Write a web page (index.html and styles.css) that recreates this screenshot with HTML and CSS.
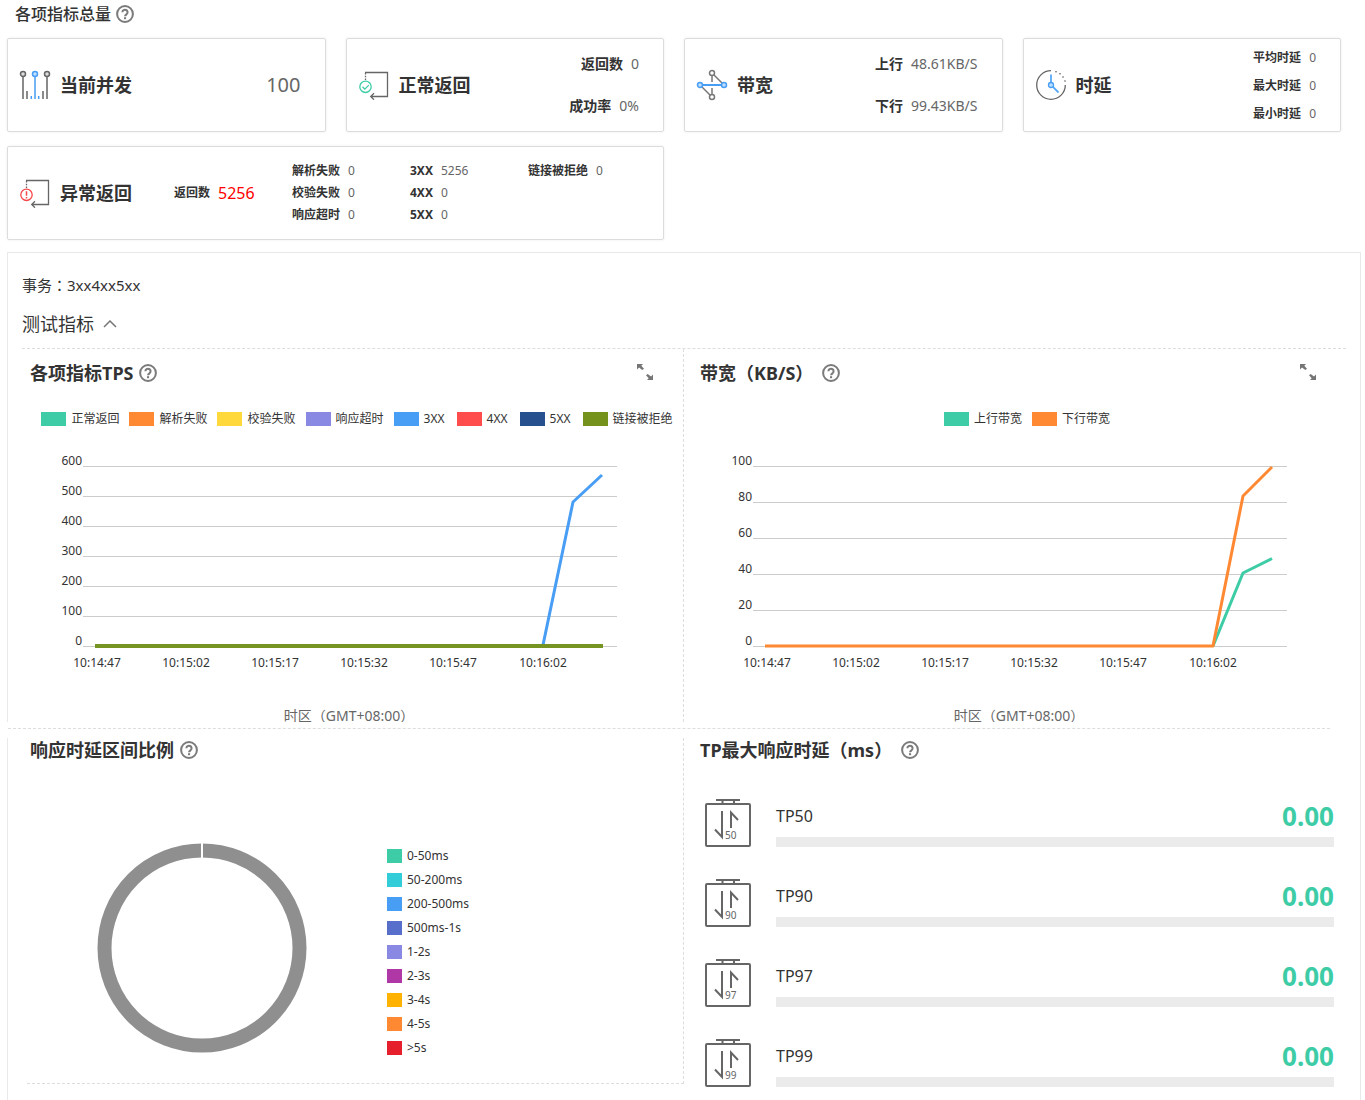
FILE: index.html
```html
<!DOCTYPE html>
<html lang="zh-CN">
<head>
<meta charset="utf-8">
<meta name="viewport" content="width=device-width, initial-scale=1">
<title>各项指标总量</title>
<link rel="stylesheet" href="styles.css">
</head>
<body>
<svg class="defs" aria-hidden="true">
  <symbol id="help" viewBox="0 0 18 18">
    <circle cx="9" cy="9" r="7.9" fill="none" stroke="#7b7b7b" stroke-width="2"/>
    <path d="M6.4 7.3a2.6 2.5 0 1 1 4.2 1.9c-.9.7-1.5 1.1-1.5 2" fill="none" stroke="#7b7b7b" stroke-width="2"/>
    <rect x="8" y="12.2" width="2.1" height="2" fill="#7b7b7b"/>
  </symbol>
  <symbol id="expand" viewBox="0 0 18 18">
    <path d="M1 0h6L5.300 1.700 8 4.800 6.300 6 3 3.600 1 5.500zM17 16h-6l1.700-1.700L10 11.200 11.700 10 15 12.400l2-1.900z" fill="#757575"/>
  </symbol>
  <symbol id="loop" viewBox="0 0 30 30">
    <path d="M6.500 10V3" fill="none" stroke="#666" stroke-width="1.300" stroke-dasharray="1.400 1.400"/>
    <path d="M6 2.500h22.500v24H12M15 23.300l-3.300 3.200 3.300 3.200" fill="none" stroke="#666" stroke-width="1.300"/>
  </symbol>
  <symbol id="tp" viewBox="0 0 46 48">
    <rect x="1" y="5" width="44" height="42" rx="1" fill="none" stroke="#666" stroke-width="2"/>
    <path d="M11 1h24M17.500 1v4M29 1v4M17 12v26l-7-7.500M26 29V13.500l7 7.500" fill="none" stroke="#666" stroke-width="2"/>
  </symbol>
</svg>

<header class="page-head">
  <h1>各项指标总量</h1>
  <button class="icon-btn" type="button" aria-label="帮助"><svg width="18" height="18"><use href="#help"/></svg></button>
</header>

<section class="cards">
  <article class="card">
    <svg class="card-icon" viewBox="0 0 30 30" fill="none" stroke-width="1.500">
      <g stroke="#666" fill="#ddd"><circle cx="3" cy="4" r="2.500"/><circle cx="27" cy="4" r="2.500"/><path d="M3 6.500V29M27 6.500V29M7 21v8M23 21v8"/></g>
      <g stroke="#489df4" fill="#bfe0ff"><circle cx="15" cy="4" r="2.500"/><path d="M15 6.500V29M11.300 26v3M18.700 26v3"/></g>
    </svg>
    <h2>当前并发</h2>
    <p class="big">100</p>
  </article>
  <article class="card">
    <svg class="card-icon" viewBox="0 0 30 30"><use href="#loop"/><circle cx="6.500" cy="16.800" r="5.700" fill="#fff" stroke="#3dcca6" stroke-width="1.300"/><path d="M3.500 16.800l2.300 2.300 4-4" fill="none" stroke="#3dcca6" stroke-width="1.300"/></svg>
    <h2>正常返回</h2>
    <dl class="stats two"><div><dt>返回数</dt><dd>0</dd></div><div><dt>成功率</dt><dd>0%</dd></div></dl>
  </article>
  <article class="card">
    <svg class="card-icon" viewBox="0 0 30 30" fill="#fff" stroke="#777" stroke-width="1.500">
      <path d="M15 5v7M17 5l8 8M15 18v7M5 17l8 8"/><circle cx="15" cy="3" r="2.500"/><circle cx="15" cy="27" r="2.500"/>
      <g stroke="#489df4" fill="#bfe0ff"><path d="M5 15h20" stroke-width="2"/><circle cx="3" cy="15" r="2.500"/><circle cx="27" cy="15" r="2.500"/></g>
    </svg>
    <h2>带宽</h2>
    <dl class="stats two"><div><dt>上行</dt><dd>48.61KB/S</dd></div><div><dt>下行</dt><dd>99.43KB/S</dd></div></dl>
  </article>
  <article class="card">
    <svg class="card-icon" viewBox="0 0 30 30" fill="none">
      <path d="M15 .7A14.300 14.300 0 1 0 29.300 15" stroke="#666" stroke-width="1.300"/>
      <g fill="#555"><circle cx="20" cy="1.700" r=".8"/><circle cx="24" cy="3.800" r=".8"/><circle cx="27" cy="7" r=".8"/><circle cx="29" cy="11" r=".8"/></g>
      <path d="M15 4.500V15l7.500 7.500" stroke="#5aa9f7" stroke-width="1.800"/><circle cx="15" cy="15" r="2.500" fill="#bfe0ff" stroke="#489df4" stroke-width="1.300"/>
    </svg>
    <h2>时延</h2>
    <dl class="stats three"><div><dt>平均时延</dt><dd>0</dd></div><div><dt>最大时延</dt><dd>0</dd></div><div><dt>最小时延</dt><dd>0</dd></div></dl>
  </article>
  <article class="card wide">
    <svg class="card-icon" viewBox="0 0 30 30"><use href="#loop"/><circle cx="6.500" cy="16.800" r="5.700" fill="#fff" stroke="#f5484a" stroke-width="1.300"/><path d="M6.500 13.300v4.500M6.500 19v1.500" fill="none" stroke="#f5484a" stroke-width="1.500"/></svg>
    <h2>异常返回</h2>
    <dl class="total"><dt>返回数</dt><dd>5256</dd></dl>
    <dl class="errors"><div><dt>解析失败</dt><dd>0</dd></div><div><dt>校验失败</dt><dd>0</dd></div><div><dt>响应超时</dt><dd>0</dd></div></dl>
    <dl class="errors"><div><dt>3XX</dt><dd>5256</dd></div><div><dt>4XX</dt><dd>0</dd></div><div><dt>5XX</dt><dd>0</dd></div></dl>
    <dl class="errors"><div><dt>链接被拒绝</dt><dd>0</dd></div></dl>
  </article>
</section>

<main class="panel">
  <p class="task">事务<span class="colon" lang="zh-TW">：</span>3xx4xx5xx</p>
  <button class="toggle" type="button" aria-expanded="true">测试指标<svg width="14" height="8" viewBox="0 0 14 8"><path d="M1 7l6-6 6 6" fill="none" stroke="#777" stroke-width="1.500"/></svg></button>

  <div class="row row-top">
    <section class="cell cell-left">
      <header class="cell-head">
        <h3>各项指标TPS</h3>
        <button class="icon-btn" type="button" aria-label="帮助"><svg width="18" height="18"><use href="#help"/></svg></button>
        <button class="icon-btn expand" type="button" aria-label="放大"><svg width="18" height="18"><use href="#expand"/></svg></button>
      </header>
      <ul class="legend">
        <li class="c-green">正常返回</li><li class="c-orange">解析失败</li><li class="c-yellow">校验失败</li><li class="c-violet">响应超时</li><li class="c-blue code">3XX</li><li class="c-red code">4XX</li><li class="c-navy code">5XX</li><li class="c-olive">链接被拒绝</li>
      </ul>
      <svg class="plot" viewBox="0 0 654 263" role="img" aria-label="TPS">
        <path class="grid" d="M61 27.500h534M61 57.500h534M61 87.500h534M61 117.500h534M61 147.500h534M61 177.500h534M61 207.500h534"/>
        <g class="y-axis"><text x="60" y="26">600</text><text x="60" y="56">500</text><text x="60" y="86">400</text><text x="60" y="116">300</text><text x="60" y="146">200</text><text x="60" y="176">100</text><text x="60" y="206">0</text></g>
        <path class="line" stroke="#489df4" d="M521 206L551 63L580 36"/>
        <path stroke="#759422" stroke-width="4" d="M73 207H581"/>
        <g class="x-axis"><text x="75" y="228">10:14:47</text><text x="164" y="228">10:15:02</text><text x="253" y="228">10:15:17</text><text x="342" y="228">10:15:32</text><text x="431" y="228">10:15:47</text><text x="521" y="228">10:16:02</text></g>
      </svg>
      <p class="zone">时区（GMT+08:00）</p>
    </section>
    <section class="cell cell-right">
      <header class="cell-head">
        <h3>带宽（KB/S）</h3>
        <button class="icon-btn" type="button" aria-label="帮助"><svg width="18" height="18"><use href="#help"/></svg></button>
        <button class="icon-btn expand" type="button" aria-label="放大"><svg width="18" height="18"><use href="#expand"/></svg></button>
      </header>
      <ul class="legend"><li class="c-green">上行带宽</li><li class="c-orange">下行带宽</li></ul>
      <svg class="plot" viewBox="0 0 654 263" role="img" aria-label="带宽">
        <path class="grid" d="M61 27.500h534M61 63.500h534M61 99.500h534M61 135.500h534M61 171.500h534M61 207.500h534"/>
        <g class="y-axis"><text x="60" y="26">100</text><text x="60" y="62">80</text><text x="60" y="98">60</text><text x="60" y="134">40</text><text x="60" y="170">20</text><text x="60" y="206">0</text></g>
        <path class="line" stroke="#3dcca6" d="M521 207L551 134L580 119.500"/>
        <path class="line" stroke="#ff8833" d="M73 207H521L551 57L580 28"/>
        <g class="x-axis"><text x="75" y="228">10:14:47</text><text x="164" y="228">10:15:02</text><text x="253" y="228">10:15:17</text><text x="342" y="228">10:15:32</text><text x="431" y="228">10:15:47</text><text x="521" y="228">10:16:02</text></g>
      </svg>
      <p class="zone">时区（GMT+08:00）</p>
    </section>
  </div>

  <div class="divider"></div>

  <div class="row row-bottom">
    <section class="cell cell-left">
      <header class="cell-head">
        <h3>响应时延区间比例</h3>
        <button class="icon-btn" type="button" aria-label="帮助"><svg width="18" height="18"><use href="#help"/></svg></button>
      </header>
      <div class="ratio">
        <svg width="210" height="210" viewBox="0 0 210 210" role="img" aria-label="响应时延区间比例">
          <circle cx="105" cy="105" r="97.500" fill="none" stroke="#8f8f8f" stroke-width="14"/>
          <path d="M105 0v16" stroke="#fff" stroke-width="2"/>
        </svg>
        <ul class="ranges">
          <li class="c-green">0-50ms</li><li class="c-cyan">50-200ms</li><li class="c-blue">200-500ms</li><li class="c-indigo">500ms-1s</li><li class="c-violet">1-2s</li><li class="c-purple">2-3s</li><li class="c-amber">3-4s</li><li class="c-orange">4-5s</li><li class="c-crimson">&gt;5s</li>
        </ul>
      </div>
    </section>
    <section class="cell cell-right">
      <header class="cell-head">
        <h3>TP最大响应时延（ms）</h3>
        <button class="icon-btn" type="button" aria-label="帮助"><svg width="18" height="18"><use href="#help"/></svg></button>
      </header>
      <ul class="tp-list">
        <li><svg class="tp-icon" viewBox="0 0 46 48"><use href="#tp"/><text x="20" y="40">50</text></svg><label for="tp50">TP50</label><strong>0.00</strong><progress id="tp50" value="0" max="100"></progress></li>
        <li><svg class="tp-icon" viewBox="0 0 46 48"><use href="#tp"/><text x="20" y="40">90</text></svg><label for="tp90">TP90</label><strong>0.00</strong><progress id="tp90" value="0" max="100"></progress></li>
        <li><svg class="tp-icon" viewBox="0 0 46 48"><use href="#tp"/><text x="20" y="40">97</text></svg><label for="tp97">TP97</label><strong>0.00</strong><progress id="tp97" value="0" max="100"></progress></li>
        <li><svg class="tp-icon" viewBox="0 0 46 48"><use href="#tp"/><text x="20" y="40">99</text></svg><label for="tp99">TP99</label><strong>0.00</strong><progress id="tp99" value="0" max="100"></progress></li>
      </ul>
    </section>
  </div>
</main>
</body>
</html>
```
FILE: styles.css
```css
* { box-sizing: border-box; }
body {
  margin: 0;
  min-height: 100vh;
  display: flex;
  flex-direction: column;
  background: #fff;
  color: #333;
  font: 14px/20px "Noto Sans", "Noto Sans CJK SC", sans-serif;
}
h1, h2, h3, p, ul, dl, dd { margin: 0; padding: 0; }
ul { list-style: none; }
svg { display: block; flex: none; }
button { margin: 0; padding: 0; border: 0; background: none; color: inherit; font: inherit; cursor: pointer; }
.defs { position: absolute; width: 0; height: 0; }

.page-head { display: flex; align-items: center; gap: 5px; height: 27px; padding-left: 15px; }
h1 { font-size: 16px; line-height: 24px; font-weight: 500; }

/* Summary cards */
.cards {
  display: grid;
  grid-template-columns: repeat(4, minmax(0, 1fr));
  grid-auto-rows: 94px;
  gap: 14px 20px;
  margin: 11px 24px 12px 7px;
}
.card {
  display: flex;
  align-items: center;
  padding: 0 24px 0 12px;
  border: 1px solid #dcdcdc;
  border-radius: 2px;
  box-shadow: 0 0 3px #eee;
  white-space: nowrap;
}
.card.wide { grid-column: span 2; }
.card-icon { width: 30px; height: 30px; margin-right: 10px; overflow: visible; }
h2 { font-size: 18px; line-height: 24px; font-weight: 700; }
dt { font-weight: 700; }
dd { color: #666; }
.big { margin-left: auto; color: #666; font-size: 20px; }
.stats { margin-left: auto; display: grid; }
.stats div { display: flex; justify-content: flex-end; align-items: center; gap: 8px; }
.two { grid-auto-rows: 42px; }
.three { grid-auto-rows: 28px; padding-top: 2px; font-size: 12px; }
.total { display: flex; flex: none; align-items: center; gap: 8px; width: 118px; margin-left: 42px; font-size: 12px; }
.total dd { color: #f00; font-size: 16px; }
.errors { display: grid; flex: 0 0 118px; grid-auto-rows: 22px; align-content: start; height: 66px; font-size: 12px; }
.errors:last-child { flex-basis: auto; }
.errors div { display: flex; align-items: center; gap: 8px; }

/* Transaction panel */
.panel { flex: 1; margin: 0 4px 0 7px; padding: 22px 14px 0; border: 1px solid #e9e9e9; border-bottom: 0; }
.task { font-size: 15px; line-height: 20px; }
.colon { font-family: "Noto Sans CJK TC", sans-serif; }
.toggle { display: flex; align-items: center; gap: 9px; margin: 17px 0 12px; font-size: 18px; line-height: 24px; }
.row { display: grid; grid-template-columns: repeat(2, minmax(0, 1fr)); }
.row-top { border-top: 1px dashed #ddd; }
.cell-left { padding-right: 7px; border-right: 1px dashed #ddd; }
.cell-right { padding-left: 8px; }
.cell-head { display: flex; align-items: center; gap: 6px; height: 48px; padding: 0 22px 0 8px; }
.cell-right .cell-head { gap: 9px; padding-right: 29px; }
.expand { margin-left: auto; }
h3 { font-size: 18px; line-height: 24px; font-weight: 700; }

.legend { display: flex; justify-content: center; align-items: center; gap: 10px; height: 42px; padding: 2px 0 0 16px; font-size: 12px; white-space: nowrap; }
.legend li, .ranges li { display: flex; align-items: center; gap: 5px; }
.legend li::before { content: ""; width: 25px; height: 14px; background: var(--c); }
.legend .code { width: 53px; }
.c-green { --c: #3dcca6; }
.c-orange { --c: #ff8833; }
.c-yellow { --c: #ffd93b; }
.c-violet { --c: #8989e3; }
.c-blue { --c: #489df4; }
.c-red { --c: #ff4c4c; }
.c-navy { --c: #27508f; }
.c-olive { --c: #75931c; }
.c-cyan { --c: #33cdd9; }
.c-indigo { --c: #576ecb; }
.c-purple { --c: #b037a6; }
.c-amber { --c: #ffb300; }
.c-crimson { --c: #e51f2b; }

.plot { width: 100%; height: auto; fill: none; }
.plot text { fill: #333; font-size: 12px; }
.y-axis { text-anchor: end; }
.x-axis { text-anchor: middle; }
.grid { stroke: #ccc; }
.line { stroke-width: 3; stroke-linejoin: round; }
.zone { height: 20px; color: #666; line-height: 28px; text-align: center; }

.divider { position: relative; height: 16px; margin: 0 16px 0 -15px; background: #fff; }
.divider::before { content: ""; display: block; height: 6px; margin-left: 1px; border-bottom: 1px dashed #ddd; }

.row-bottom { align-items: start; }
.row-bottom .cell-head { height: 24px; }
.row-bottom .cell-left { margin-left: 5px; border-bottom: 1px dashed #ddd; }
.row-bottom .cell-left .cell-head { padding-left: 3px; }
.ratio { display: flex; gap: 80px; padding: 81px 0 23px 70px; }
.ranges { padding-top: 1px; font-size: 12px; line-height: 24px; }
.ranges li::before { content: ""; width: 15px; height: 14px; background: var(--c); }

.tp-list { display: grid; grid-auto-rows: 80px; padding: 37px 12px 0 13px; }
.tp-list li { display: grid; grid-template-columns: 46px 1fr auto; grid-template-rows: 34px 14px; column-gap: 25px; align-items: end; align-content: start; }
.tp-icon { grid-row: span 2; width: 46px; height: 48px; }
.tp-icon text { fill: #666; font-size: 10px; }
.tp-list label { font-size: 16px; line-height: 34px; }
.tp-list strong { color: #3dcca6; font-size: 26px; line-height: 34px; }
progress { grid-column: 2 / 4; appearance: none; display: block; width: 100%; height: 10px; border: 0; background: #ebebeb; }
progress::-webkit-progress-bar { background: #ebebeb; }
progress::-webkit-progress-value { background: #3dcca6; }
```
